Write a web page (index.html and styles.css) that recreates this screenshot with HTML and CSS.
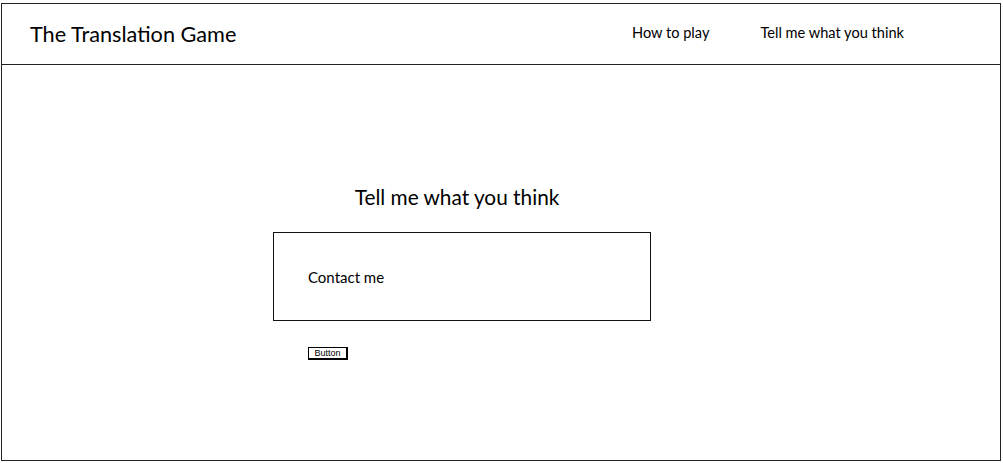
FILE: index.html
```html
<!DOCTYPE html>
<html>
<head>
<meta charset="utf-8">
<link rel="stylesheet" href="styles.css">
</head>
<body>
<div class="frame">
  <header class="header">
    <div class="brand">The Translation Game</div>
    <nav class="nav">
      <span class="nav-link">How to play</span>
      <span class="nav-link">Tell me what you think</span>
    </nav>
  </header>
  <main class="main">
    <div class="content">
      <h1 class="title">Tell me what you think</h1>
      <div class="contact-box">Contact me</div>
      <button class="btn">Button</button>
    </div>
  </main>
</div>
</body>
</html>
```

FILE: styles.css
```css
html, body {
  margin: 0;
  padding: 0;
  background: #fff;
}
body {
  font-family: "Lato", "Open Sans", sans-serif;
  color: #000;
}
.frame {
  margin: 3px 0 0 1px;
  width: 1000px;
  height: 458px;
  box-sizing: border-box;
  border: 1px solid #222;
  display: flex;
  flex-direction: column;
}
.header {
  height: 60px;
  border-bottom: 1px solid #222;
  display: flex;
  align-items: center;
  padding-left: 28px;
}
.brand {
  font-size: 21.7px;
  width: 602px;
}
.nav {
  display: flex;
  gap: 51px;
  font-size: 14.6px;
  padding-bottom: 4px;
}
.main {
  flex: 1;
}
.content {
  margin-left: 271px;
  width: 378px;
  display: flex;
  flex-direction: column;
}
.title {
  margin: 119px 0 0 0;
  font-size: 20.8px;
  font-weight: normal;
  text-align: center;
  line-height: 26px;
  padding-right: 10px;
}
.contact-box {
  margin-top: 22px;
  height: 89px;
  border: 1px solid #111;
  box-sizing: border-box;
  display: flex;
  align-items: center;
  padding: 0 0 0 34px;
  font-size: 15px;
}
.btn {
  align-self: flex-start;
  margin: 26px 0 0 35px;
  font-family: "Liberation Sans", Arial, sans-serif;
  font-size: 9px;
  line-height: 10px;
  padding: 0 4px;
  background: #fff;
  border: 1px solid #000;
  border-right-width: 2px;
  border-bottom-width: 2px;
  border-radius: 0;
  height: 13px;
  width: 40px;
}
```
